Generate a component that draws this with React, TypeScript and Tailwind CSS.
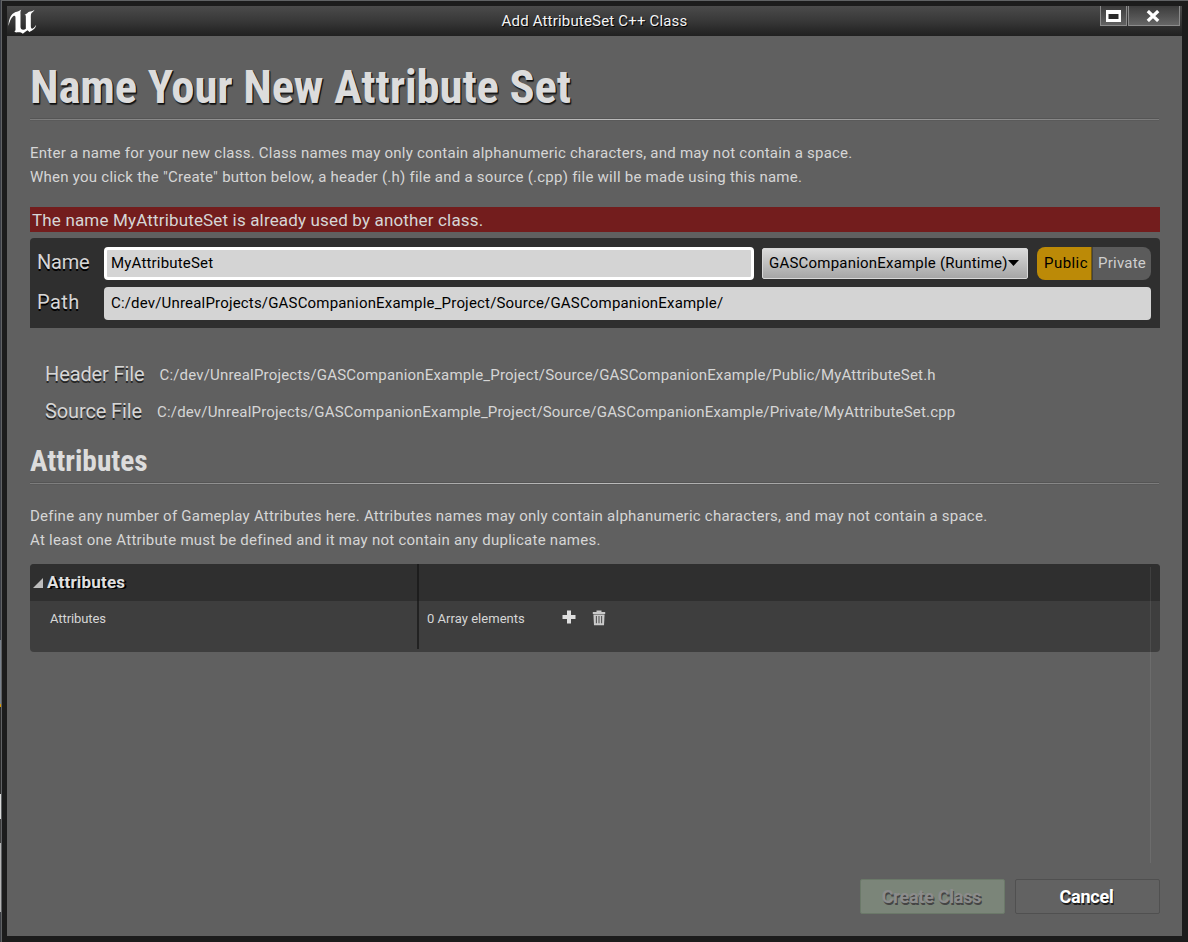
import React from "react";

const PROJECT = "C:/dev/UnrealProjects/GASCompanionExample_Project/Source/GASCompanionExample/";

function UnrealLogo() {
  return (
    <svg viewBox="24 27 86 75" className="h-[25px] w-[29px]" fill="#fff">
      <path d="M25 78 C25 58 32 42 46 36 C52 34 57 33 63 29 C60 34 61 38 61 44 V80 C61 86 64 89 69 89 C72 89 75 88 77 86 V50 C77 46 76 45 73 45 C80 41 83 37 87 35 C92 33 97 34 103 29 C101 35 95 37 93 41 C92 44 92 48 92 54 V79 C92 85 95 88 99 85 C103 82 105 78 108 75 C106 86 97 91 88 96 L82 91 C77 95 72 98 68 101 C63 97 58 96 52 97 C46 98 43 96 43 93 C47 93 46 90 46 85 V54 C46 48 44 46 39 49 C32 54 28 66 25 78 Z" />
    </svg>
  );
}

function TitleBar() {
  return (
    <header className="grid h-[30px] shrink-0 grid-cols-[1fr_auto_1fr] bg-linear-to-b from-[#4b4b4b] via-[#383838] to-[#202020]">
      <div className="pt-[3px] pl-px">
        <UnrealLogo />
      </div>
      <span className="text-[15px] leading-[30px] tracking-[0.18px] text-[#f4f4f4] [text-shadow:1px_1px_0_#000]">
        Add AttributeSet C++ Class
      </span>
      <div className="flex h-5 justify-end gap-px pr-0.5">
        <button className="flex w-[27px] items-center justify-center border border-t-0 border-[#8b8b8b] bg-linear-to-b from-[#3c3c3c] to-[#626262]">
          <svg viewBox="0 0 15 12" className="h-3 w-[15px]">
            <path d="M0 0H15V12H0Z" fill="#fff" />
            <path d="M2.5 4H12.5V9H2.5Z" fill="#2a2a2a" />
          </svg>
        </button>
        <button className="flex w-[52px] items-center justify-center border border-t-0 border-[#8b8b8b] bg-linear-to-b from-[#3c3c3c] to-[#666] pr-[3px]">
          <svg viewBox="0 0 14 12" className="h-3 w-3.5">
            <path d="M1.8 1.1L12.2 10.9M12.2 1.1L1.8 10.9" stroke="#fff" strokeWidth="3.3" />
          </svg>
        </button>
      </div>
    </header>
  );
}

function Rule() {
  return (
    <div className="mr-px h-[3px] shrink-0">
      <div className="h-px bg-[#555]" />
      <div className="h-px bg-linear-to-r from-[#7c7c7c] via-[#bcbcbc] to-[#7c7c7c]" />
      <div className="h-px bg-[#5a5a5a]" />
    </div>
  );
}

function FileRow({ label, path }: { label: string; path: string }) {
  return (
    <div className="flex h-[26px] items-center pl-[15px]">
      <span className="text-[20px] leading-[26px] tracking-[-0.12px] [text-shadow:0_2px_0_#262626]">{label}</span>
      <span className="ml-[15px] pt-[2px] text-[15px] leading-6 tracking-[0.185px]">{path}</span>
    </div>
  );
}

function ClassForm() {
  return (
    <section className="mt-1.5 flex h-[90px] flex-col gap-[7px] rounded-t-[4px] bg-[#2f2f2f] pt-[9px] pr-[9px] pl-[7px]">
      <div className="flex h-[33px]">
        <span className="w-[67px] text-[20px] leading-[30px] tracking-[-0.2px] [text-shadow:0_2px_0_#000]">Name</span>
        <div className="w-[650px] rounded-[4px] border-[3px] border-white bg-[#d4d4d4] pl-1 text-[15px] leading-[26px] tracking-[0.18px] text-black">
          MyAttributeSet
        </div>
        <button className="my-px ml-2 flex w-[266px] items-start rounded-[2px] border border-[#d8d8d8] bg-linear-to-b from-[#dadada] to-[#a6a6a6] pl-1.5 text-black">
          <span className="text-[15px] leading-7 tracking-[0.21px]">GASCompanionExample (Runtime)</span>
          <svg viewBox="0 0 10 6" className="mt-[11px] h-1.5 w-[11px] shrink-0" preserveAspectRatio="none">
            <path d="M0 0H10L5 6Z" />
          </svg>
        </button>
        <div className="ml-[9px] flex overflow-hidden rounded-[8px] text-[15px] leading-8">
          <span className="w-[55px] border-r border-[#74590c] bg-[#bc8a07] pl-[7px] tracking-[0.45px] text-black">Public</span>
          <span className="w-[59px] border-l border-[#434343] bg-[#5b5b5b] pl-[5px] tracking-[0.24px] text-[#cfcfcf]">Private</span>
        </div>
      </div>
      <div className="flex h-[33px]">
        <span className="w-[67px] text-[20px] leading-[30px] tracking-[0.4px] [text-shadow:0_2px_0_#000]">Path</span>
        <div className="flex-1 rounded-[4px] bg-[#d4d4d4] pl-[7px] text-[15px] leading-8 tracking-[0.18px] text-black">{PROJECT}</div>
      </div>
    </section>
  );
}

function AttributeTable() {
  return (
    <section className="h-[88px] shrink-0 overflow-hidden rounded-[4px] bg-[#3e3e3e]">
      <div className="flex h-[37px] bg-[#2f2f2f]">
        <div className="flex w-[387px] pl-[3px]">
          <svg viewBox="0 0 10 10" className="mt-3.5 h-2.5 w-2.5">
            <path d="M10 0V10H0Z" fill="#bdbdbd" />
          </svg>
          <span className="ml-1 text-[17px] leading-[36px] font-bold tracking-[0.2px] text-[#dfdfdf] [text-shadow:2px_1px_0_#000]">
            Attributes
          </span>
        </div>
        <div className="w-0.5 bg-[#1d1d1d]" />
      </div>
      <div className="flex h-12 text-[13px] leading-[35px]">
        <span className="w-[387px] pl-5 tracking-[-0.08px]">Attributes</span>
        <div className="w-0.5 bg-[#222]" />
        <span className="ml-2 w-[135px] tracking-[0.03px]">0 Array elements</span>
        <svg viewBox="0 0 14 14" className="mt-[9px] h-3.5 w-3.5">
          <path d="M5 0.5H9V5H13.5V9H9V13.5H5V9H0.5V5H5Z" fill="#dedede" />
        </svg>
        <svg viewBox="0 0 14 16" className="mt-[9px] ml-4 h-4 w-3.5">
          <path d="M0.8 2H4.5V0.5H9.5V2H13.2V4H0.8Z" fill="#cacaca" />
          <path d="M1.4 4.6H12.6L12 15.2H2Z" fill="#cacaca" />
          <path d="M4.4 6V13.2M7 6V13.2M9.6 6V13.2" stroke="#555" strokeWidth="1.1" />
        </svg>
      </div>
    </section>
  );
}

function DesktopEdge() {
  return (
    <div className="flex w-px shrink-0 flex-col bg-[#3d3f45]">
      <div className="h-[640px] bg-[#3b3e46]" />
      <div className="h-16 bg-[#7a828d]" />
      <div className="h-[3px] bg-[#d99a00]" />
      <div className="h-[87px] bg-[#2b2b2b]" />
      <div className="h-[25px] bg-[#dadada]" />
      <div className="h-6 bg-[#3e3e3e]" />
      <div className="h-[69px] bg-[#b5b5b5]" />
    </div>
  );
}

export default function App() {
  return (
    <div className="flex h-[942px] w-[1188px] overflow-hidden font-['Roboto',sans-serif] whitespace-nowrap text-[#d6d6d6]">
      <DesktopEdge />
      <main className="flex flex-1 flex-col border-t border-l border-[#606264] bg-[#1c1c1c] pt-[5px] pr-1.5 pb-1.5 pl-[5px]">
        <TitleBar />
        <div className="flex flex-1 flex-col bg-[#606060] pr-[22px] pl-[23px]">
          <h1 className="mt-6 mb-1 h-[54px] font-['Roboto_Condensed',sans-serif] text-[46.67px] leading-[54px] font-bold tracking-[-0.12px] text-[#dcdcdc] [text-shadow:1px_1px_0_#111,1px_2px_1px_#222]">
            Name Your New Attribute Set
          </h1>
          <Rule />
          <p className="mt-5 text-[15px] leading-6 tracking-[0.24px]">
            Enter a name for your new class. Class names may only contain alphanumeric characters, and may not contain a space.
            <br />
            <span className="tracking-[0.25px]">
              When you click the "Create" button below, a header (.h) file and a source (.cpp) file will be made using this name.
            </span>
          </p>
          <div className="mt-[18px] h-[25px] bg-[#731d1d] pl-0.5 text-[17px] leading-[26px] tracking-[0.16px]">
            The name MyAttributeSet is already used by another class.
          </div>
          <ClassForm />
          <div className="mt-[33px] flex flex-col gap-[11px]">
            <FileRow label="Header File" path={PROJECT + "Public/MyAttributeSet.h"} />
            <FileRow label="Source File" path={PROJECT + "Private/MyAttributeSet.cpp"} />
          </div>
          <h2 className="mt-5 h-[38px] font-['Roboto_Condensed',sans-serif] text-[29.33px] leading-[34px] font-bold text-[#dcdcdc]">
            Attributes
          </h2>
          <Rule />
          <p className="mt-[19px] mb-3 text-[15px] leading-6 tracking-[0.24px]">
            Define any number of Gameplay Attributes here. Attributes names may only contain alphanumeric characters, and may not contain a space.
            <br />
            <span className="tracking-[0.26px]">At least one Attribute must be defined and it may not contain any duplicate names.</span>
          </p>
          <div className="relative h-[299px]">
            <AttributeTable />
            <div className="absolute top-[3px] right-[9px] h-[296px] w-px bg-white/8" />
          </div>
          <div className="mt-4 flex justify-end gap-2.5 text-[18px] font-bold">
            <button className="h-[35px] w-[145px] rounded-[2px] border border-[#6b7969] bg-[#7b8579] pr-0.5 leading-[33px] tracking-[-0.25px] text-[#8c8c8c] [text-shadow:1px_2px_0_#444]">
              Create Class
            </button>
            <button className="h-[35px] w-[145px] rounded-[2px] border border-[#505050] bg-[#626262] pr-0.5 leading-[33px] tracking-[-0.2px] text-white [text-shadow:1px_2px_0_#1c1c1c]">
              Cancel
            </button>
          </div>
        </div>
      </main>
    </div>
  );
}
